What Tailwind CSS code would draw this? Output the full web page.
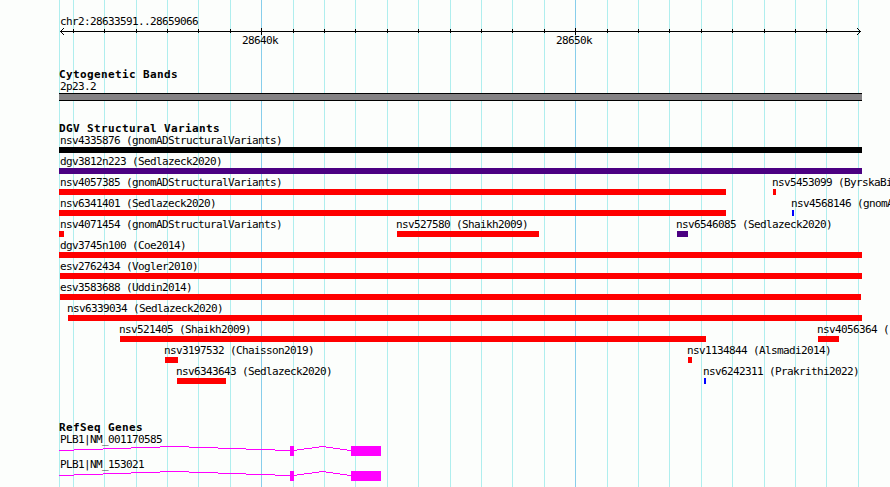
<!DOCTYPE html>
<html lang="en">
<head>
    <meta charset="UTF-8">
    <meta name="viewport" content="width=device-width, initial-scale=1.0">
    <title>chr2:28633591..28659066</title>
    <script src="https://cdn.jsdelivr.net/npm/@tailwindcss/browser@4"></script>
</head>
<body class="relative w-[890px] h-[487px] overflow-hidden bg-[#fcfefc] text-black font-['DejaVu_Sans_Mono',monospace] text-[11px] leading-[12px] tracking-[-0.622px] whitespace-nowrap">
    <!-- grid lines, one per 1k -->
    <svg class="absolute inset-0 -z-10" width="890" height="487" fill="none" shape-rendering="crispEdges">
        <path stroke="#afeeee" d="M59.5 0v487M73.5 0v487M104.5 0v487M136.5 0v487M167.5 0v487M198.5 0v487M230.5 0v487M293.5 0v487M324.5 0v487M355.5 0v487M387.5 0v487M418.5 0v487M450.5 0v487M481.5 0v487M512.5 0v487M544.5 0v487M607.5 0v487M638.5 0v487M669.5 0v487M701.5 0v487M732.5 0v487M764.5 0v487M795.5 0v487M826.5 0v487M858.5 0v487"/>
        <path stroke="#87ceeb" d="M261.5 0v487M575.5 0v487"/>
    </svg>

    <!-- scale -->
    <header class="pt-4">
        <div class="h-3 pl-[60px]">chr2:28633591..28659066</div>
        <svg class="block" width="890" height="7" viewBox="0 28 890 7" fill="none" stroke="#000" shape-rendering="crispEdges">
            <path d="M60 31.5H861"/>
            <path d="M73.5 29v4M104.5 29v4M136.5 29v4M167.5 29v4M198.5 29v4M230.5 29v4M293.5 29v4M324.5 29v4M355.5 29v4M387.5 29v4M418.5 29v4M450.5 29v4M481.5 29v4M512.5 29v4M544.5 29v4M607.5 29v4M638.5 29v4M669.5 29v4M701.5 29v4M732.5 29v4M764.5 29v4M795.5 29v4M826.5 29v4"/>
            <path d="M261.5 28v7M575.5 28v7"/>
            <path d="M61 30.5h1M62 29.5h1M63 28.5h1M61 32.5h1M62 33.5h1M63 34.5h1M859 30.5h1M858 29.5h1M857 28.5h1M859 32.5h1M858 33.5h1M857 34.5h1"/>
        </svg>
        <div class="grid h-[10px]">
            <span class="col-start-1 row-start-1 ml-[242px]">28640k</span>
            <span class="col-start-1 row-start-1 ml-[556px]">28650k</span>
        </div>
    </header>

    <section class="mt-[23px]">
        <h2 class="h-[10px] pt-px pl-[59px] font-bold tracking-[0.378px]">Cytogenetic Bands</h2>
        <div class="mt-[3px] h-3 pl-[60px]">2p23.2</div>
        <div class="ml-[59px] w-[803px] h-2 border-y border-black bg-[#848284]"></div>
    </section>

    <section class="mt-[21px]">
        <h2 class="h-[10px] pt-px pl-[59px] font-bold tracking-[0.378px]">DGV Structural Variants</h2>
        <div class="grid grid-cols-1 auto-rows-[21px]">
            <div class="row-start-1 col-start-1 ml-[59px]">
                <div class="h-[15px] pt-[3px] pl-px">nsv4335876 (gnomADStructuralVariants)</div>
                <div class="h-1.5 w-[803px] bg-black"></div>
            </div>
            <div class="row-start-2 col-start-1 ml-[59px]">
                <div class="h-[15px] pt-[3px] pl-px">dgv3812n223 (Sedlazeck2020)</div>
                <div class="h-1.5 w-[803px] bg-[#4b0082]"></div>
            </div>
            <div class="row-start-3 col-start-1 ml-[59px]">
                <div class="h-[15px] pt-[3px] pl-px">nsv4057385 (gnomADStructuralVariants)</div>
                <div class="h-1.5 w-[667px] bg-[#ff0000]"></div>
            </div>
            <div class="row-start-3 col-start-1 ml-[772px]">
                <div class="h-[15px] pt-[3px]">nsv5453099 (ByrskaBi</div>
                <div class="ml-px h-1.5 w-[3px] bg-[#ff0000]"></div>
            </div>
            <div class="row-start-4 col-start-1 ml-[59px]">
                <div class="h-[15px] pt-[3px] pl-px">nsv6341401 (Sedlazeck2020)</div>
                <div class="h-1.5 w-[667px] bg-[#ff0000]"></div>
            </div>
            <div class="row-start-4 col-start-1 ml-[791px]">
                <div class="h-[15px] pt-[3px]">nsv4568146 (gnomA</div>
                <div class="ml-px h-1.5 w-0.5 bg-[#0000ff]"></div>
            </div>
            <div class="row-start-5 col-start-1 ml-[59px]">
                <div class="h-[15px] pt-[3px] pl-px">nsv4071454 (gnomADStructuralVariants)</div>
                <div class="h-1.5 w-[5px] bg-[#ff0000]"></div>
            </div>
            <div class="row-start-5 col-start-1 ml-[396px]">
                <div class="h-[15px] pt-[3px]">nsv527580 (Shaikh2009)</div>
                <div class="ml-px h-1.5 w-[142px] bg-[#ff0000]"></div>
            </div>
            <div class="row-start-5 col-start-1 ml-[676px]">
                <div class="h-[15px] pt-[3px]">nsv6546085 (Sedlazeck2020)</div>
                <div class="ml-px h-1.5 w-[11px] bg-[#4b0082]"></div>
            </div>
            <div class="row-start-6 col-start-1 ml-[59px]">
                <div class="h-[15px] pt-[3px] pl-px">dgv3745n100 (Coe2014)</div>
                <div class="h-1.5 w-[803px] bg-[#ff0000]"></div>
            </div>
            <div class="row-start-7 col-start-1 ml-[60px]">
                <div class="h-[15px] pt-[3px]">esv2762434 (Vogler2010)</div>
                <div class="h-1.5 w-[802px] bg-[#ff0000]"></div>
            </div>
            <div class="row-start-8 col-start-1 ml-[60px]">
                <div class="h-[15px] pt-[3px]">esv3583688 (Uddin2014)</div>
                <div class="h-1.5 w-[801px] bg-[#ff0000]"></div>
            </div>
            <div class="row-start-9 col-start-1 ml-[67px]">
                <div class="h-[15px] pt-[3px]">nsv6339034 (Sedlazeck2020)</div>
                <div class="ml-px h-1.5 w-[794px] bg-[#ff0000]"></div>
            </div>
            <div class="row-start-10 col-start-1 ml-[119px]">
                <div class="h-[15px] pt-[3px]">nsv521405 (Shaikh2009)</div>
                <div class="ml-px h-1.5 w-[586px] bg-[#ff0000]"></div>
            </div>
            <div class="row-start-10 col-start-1 ml-[817px]">
                <div class="h-[15px] pt-[3px]">nsv4056364 (</div>
                <div class="ml-px h-1.5 w-[21px] bg-[#ff0000]"></div>
            </div>
            <div class="row-start-11 col-start-1 ml-[164px]">
                <div class="h-[15px] pt-[3px]">nsv3197532 (Chaisson2019)</div>
                <div class="ml-px h-1.5 w-[13px] bg-[#ff0000]"></div>
            </div>
            <div class="row-start-11 col-start-1 ml-[687px]">
                <div class="h-[15px] pt-[3px]">nsv1134844 (Alsmadi2014)</div>
                <div class="ml-px h-1.5 w-1 bg-[#ff0000]"></div>
            </div>
            <div class="row-start-12 col-start-1 ml-[176px]">
                <div class="h-[15px] pt-[3px]">nsv6343643 (Sedlazeck2020)</div>
                <div class="ml-px h-1.5 w-[49px] bg-[#ff0000]"></div>
            </div>
            <div class="row-start-12 col-start-1 ml-[703px]">
                <div class="h-[15px] pt-[3px]">nsv6242311 (Prakrithi2022)</div>
                <div class="ml-px h-1.5 w-0.5 bg-[#0000ff]"></div>
            </div>
        </div>
    </section>

    <section class="mt-[37px]">
        <h2 class="h-[10px] pt-px pl-[59px] font-bold tracking-[0.378px]">RefSeq Genes</h2>
        <div class="mt-0.5 h-[25px]">
            <div class="h-[13px] pt-px pl-[60px]">PLB1|NM_001170585</div>
            <svg class="block" width="890" height="10" viewBox="0 0 890 10" shape-rendering="crispEdges">
                <path fill="none" stroke="#ff00ff" d="M59 4.5H74M74 3.5H103M103 2.5H131M131 1.5H160M160 .5H189M189 1.5H218M218 2.5H246M246 3.5H275M275 4.5H297M297 3.5H304M304 2.5H312M312 1.5H319M319 .5H326M326 1.5H333M333 2.5H340M340 3.5H347M347 4.5H351"/>
                <path fill="#ff00ff" d="M290 0h4v10h-4zM351 0h30v10h-30z"/>
            </svg>
        </div>
        <div class="h-[25px]">
            <div class="h-[13px] pt-px pl-[60px]">PLB1|NM_153021</div>
            <svg class="block" width="890" height="10" viewBox="0 0 890 10" shape-rendering="crispEdges">
                <path fill="none" stroke="#ff00ff" d="M59 4.5H74M74 3.5H103M103 2.5H131M131 1.5H160M160 .5H189M189 1.5H218M218 2.5H246M246 3.5H275M275 4.5H297M297 3.5H304M304 2.5H312M312 1.5H319M319 .5H326M326 1.5H333M333 2.5H340M340 3.5H347M347 4.5H351"/>
                <path fill="#ff00ff" d="M290 0h4v10h-4zM351 0h30v10h-30z"/>
            </svg>
        </div>
    </section>
</body>
</html>
